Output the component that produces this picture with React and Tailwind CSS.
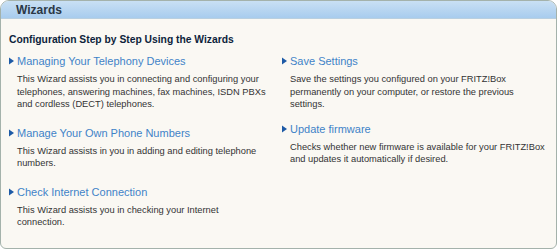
import React from "react";

function Item({ title, children, className = "", descWidth = "w-[250px]" }) {
  return (
    <div className={className}>
      <div className="flex items-center h-[16px]">
        <svg width="9" height="8" viewBox="0 0 9 8" className="shrink-0">
          <path d="M1 0.5 L6 4 L1 7.5 Z" fill="#1d5aa6" />
        </svg>
        <a className="text-[11px] leading-[16px] text-[#3f83c8]">{title}</a>
      </div>
      <p className={`mt-[4px] ml-[9px] ${descWidth} text-[9.3px] leading-[12.5px] text-[#333333]`}>
        {children}
      </p>
    </div>
  );
}

export default function App() {
  return (
    <div className="w-[560px] h-[250px] bg-white" style={{ fontFamily: '"Liberation Sans", Arial, sans-serif' }}>
      <div className="w-[557px] h-[249px] border border-[#a4b2ab] rounded-t-[9px] rounded-b-[6px] bg-[#faf8f3] overflow-hidden flex flex-col">
        <div className="h-[18px] bg-gradient-to-b from-[#c9e0f4] to-[#a8ccee] border-b border-[#b9cfe0] flex items-center pl-[15px]">
          <span className="text-[12px] font-bold text-[#2b3846]">Wizards</span>
        </div>
        <div className="pl-[7px] pt-[15px]">
          <h2 className="text-[10.3px] font-bold text-[#0d1f3c] leading-[12px] ml-[1px]">
            Configuration Step by Step Using the Wizards
          </h2>
          <div className="flex mt-[7px]">
            <div className="w-[273px]">
              <Item title="Managing Your Telephony Devices">
                This Wizard assists you in connecting and configuring your telephones, answering machines, fax machines, ISDN PBXs and cordless (DECT) telephones.
              </Item>
              <Item title="Manage Your Own Phone Numbers" className="mt-[14px]">
                This Wizard assists in you in adding and editing telephone numbers.
              </Item>
              <Item title="Check Internet Connection" className="mt-[14px]">
                This Wizard assists you in checking your Internet connection.
              </Item>
            </div>
            <div className="w-[270px]">
              <Item title="Save Settings">
                Save the settings you configured on your FRITZ!Box permanently on your computer, or restore the previous settings.
              </Item>
              <Item title="Update firmware" className="mt-[10px]" descWidth="w-[260px]">
                Checks whether new firmware is available for your FRITZ!Box and updates it automatically if desired.
              </Item>
            </div>
          </div>
        </div>
      </div>
    </div>
  );
}
